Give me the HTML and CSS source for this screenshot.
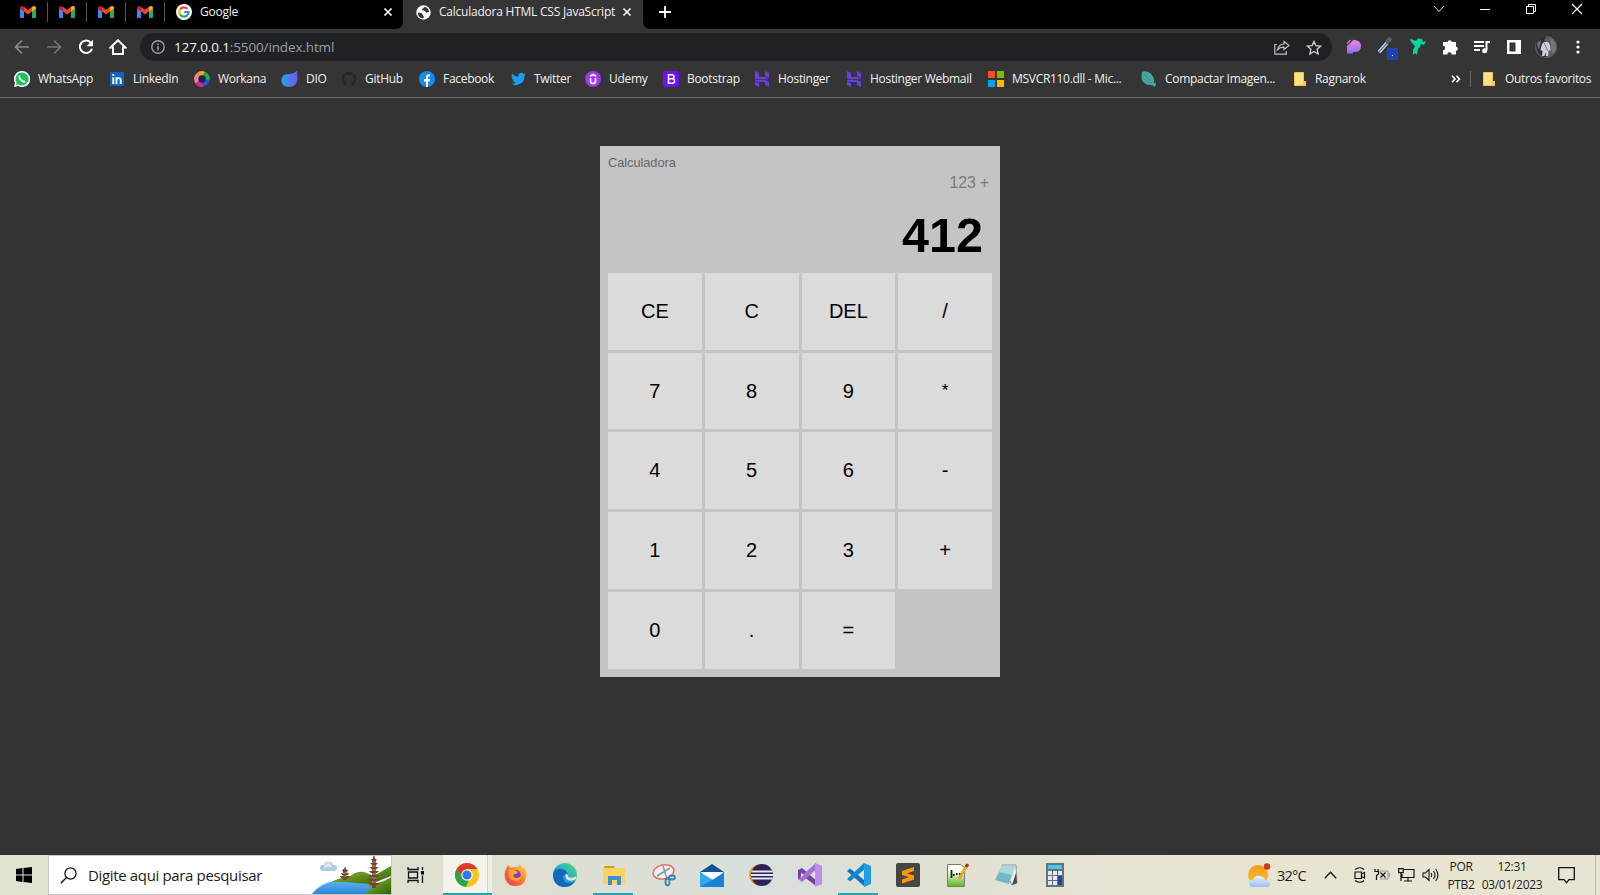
FILE: index.html
```html
<!DOCTYPE html>
<html lang="pt-BR">
<head>
<meta charset="utf-8">
<title>Calculadora HTML CSS JavaScript</title>
<link rel="stylesheet" href="styles.css">
</head>
<body>
<svg class="defs" aria-hidden="true">
  <defs>
    <linearGradient id="dioG"><stop offset="0" stop-color="#2aa0f0"/><stop offset="1" stop-color="#6a5be0"/></linearGradient>
    <linearGradient id="pG" x2="0" y2="1"><stop offset="0" stop-color="#f08ad0"/><stop offset="1" stop-color="#8d6bf5"/></linearGradient>
    <linearGradient id="ffG" x1="1" y1="0" x2="0" y2="1"><stop offset="0" stop-color="#ffe14a"/><stop offset=".5" stop-color="#ff7a2a"/><stop offset="1" stop-color="#e8305a"/></linearGradient>
    <linearGradient id="edG" x1="1" y1="0" x2="0" y2="1"><stop offset="0" stop-color="#5fd85a"/><stop offset=".45" stop-color="#25b5d0"/><stop offset="1" stop-color="#1560b5"/></linearGradient>
    <linearGradient id="sunG" x2="0" y2="1"><stop offset="0" stop-color="#f09a1c"/><stop offset="1" stop-color="#ffc233"/></linearGradient>
    <linearGradient id="cloudG" x2="0" y2="1"><stop offset="0" stop-color="#e8f1ff"/><stop offset="1" stop-color="#9dbdf0"/></linearGradient>
    <linearGradient id="lakeG" x2="0" y2="1"><stop offset="0" stop-color="#62b7f2"/><stop offset="1" stop-color="#2b86d8"/></linearGradient>
    <linearGradient id="hillG" x2="1" y2="1"><stop offset="0" stop-color="#9cc52a"/><stop offset="1" stop-color="#2e5e10"/></linearGradient>
    <linearGradient id="nppG" x2="0" y2="1"><stop offset=".3" stop-color="#fbfff2"/><stop offset="1" stop-color="#58b41c"/></linearGradient>
    <symbol id="gmail" viewBox="0 0 16 12"><path fill="#4285f4" d="M1 12h3V5L0 2v9q0 1 1 1z"/><path fill="#34a853" d="M12 12h3q1 0 1-1V2l-4 3z"/><path fill="#ea4335" d="M4 5.500V.8l4 3 4-3v4.700L8 8.500z"/><path fill="#c5221f" d="M0 2.500V2Q0 0 2 0q.8 0 2 1v4.500z"/><path fill="#fbbc04" d="M16 2.500V2q0-2-2-2-.8 0-2 1v4.500z"/></symbol>
    <symbol id="cross" viewBox="0 0 10 10"><path d="M1.500 1.500l7 7m0-7l-7 7" stroke="#fff" stroke-width="1.700" fill="none"/></symbol>
    <symbol id="hostinger" viewBox="0 0 16 16"><path fill="#673de6" d="M1 0l4 2v4h6l4 2.200H1zM11 0l4 2v5.200L11 5zM1 10l-0-1h10l4 2v5l-4-2v-3H5l-4-1zM1 10.500l4 1.500v4l-4-2z"/></symbol>
    <symbol id="folder" viewBox="0 0 14 16"><path fill="#ffe184" stroke="#f4c542" d="M1.500 1.500h9v9h2v4h-11z"/><path fill="#f6c84f" d="M10 10h3v5h-3z"/></symbol>
  </defs>
</svg>
<div class="screen">
  <header class="browser">
    <div class="tabstrip">
      <div class="tabs-left">
        <span class="pinned"><svg width="16" height="12"><use href="#gmail"/></svg></span>
        <span class="pinned"><svg width="16" height="12"><use href="#gmail"/></svg></span>
        <span class="pinned"><svg width="16" height="12"><use href="#gmail"/></svg></span>
        <span class="pinned"><svg width="16" height="12"><use href="#gmail"/></svg></span>
        <div class="tab">
          <svg width="16" height="16" viewBox="0 0 16 16"><circle cx="8" cy="8" r="8" fill="#fff"/><g fill="none" stroke-width="2.200"><path stroke="#ea4335" d="M4 5.600A4.700 4.700 0 0 1 11.500 4.800"/><path stroke="#fbbc05" d="M4 5.500a4.700 4.700 0 0 0 0 5"/><path stroke="#34a853" d="M4 10.400a4.700 4.700 0 0 0 7.200 1"/><path stroke="#4285f4" d="M11 11.600A4.700 4.700 0 0 0 12.700 8H8.200"/></g></svg>
          <span class="tab-title">Google</span>
          <svg class="tab-close" width="10" height="10"><use href="#cross"/></svg>
        </div>
      </div>
      <div class="tab active">
        <svg width="15" height="15" viewBox="0 0 16 16"><circle cx="8" cy="8" r="7.700" fill="#fff"/><path fill="#353535" d="M2 8.500c2-.5 4.500-.2 5 1.500.3 1.300 1.600 1.200 1.300 3.200l-.8 1C4 14 2 12 2 8.500zM8.500 2c-.2 1.800-2 1.200-2 2.800 0 1.300 1.400 1 2.500 1.200 1.400.3 1 2.200 2.800 2 1.200-.1 1.500-.6 2.200-.5C13.600 4 11.500 2 8.500 2z"/></svg>
        <span class="tab-title wide">Calculadora HTML CSS JavaScript</span>
        <svg class="tab-close" width="10" height="10"><use href="#cross"/></svg>
      </div>
      <div class="tabs-right">
        <svg width="12" height="12" viewBox="0 0 12 12"><path d="M6 0v12M0 6h12" stroke="#fff" stroke-width="1.800"/></svg>
        <div class="window-controls">
          <svg width="12" height="8" viewBox="0 0 12 8"><path d="M1 1l5 5.500L11 1" fill="none" stroke="#ddd"/></svg>
          <svg width="12" height="10" viewBox="0 0 12 10"><path d="M1 5.500h10" stroke="#fff"/></svg>
          <svg width="12" height="12" viewBox="0 0 12 12"><path d="M1.500 3.500h7v7h-7zM3.500 3V1.500h7v7H9" fill="none" stroke="#fff"/></svg>
          <svg width="12" height="12" viewBox="0 0 12 12"><path d="M1 1l10 10M11 1L1 11" stroke="#fff" stroke-width="1.200"/></svg>
        </div>
      </div>
    </div>

    <div class="toolbar">
      <div class="nav">
        <svg width="16" height="16" viewBox="0 0 16 16"><path d="M15 8H2M8 1.500L1.500 8 8 14.500" fill="none" stroke="#8a8a8a" stroke-width="1.700"/></svg>
        <svg width="16" height="16" viewBox="0 0 16 16"><path d="M1 8h13M8 1.500L14.500 8 8 14.500" fill="none" stroke="#757575" stroke-width="1.700"/></svg>
        <svg width="16" height="16" viewBox="0 0 16 16"><path d="M13 4A6.200 6.200 0 1 0 14 9.700" fill="none" stroke="#fff" stroke-width="2"/><path fill="#fff" d="M15 .8v6.500H8.500z"/></svg>
        <svg class="home" width="18" height="16" viewBox="0 0 18 16"><path d="M1.500 8.500L9 1.200l7.500 7.300H14V15H4V8.500z" fill="none" stroke="#fff" stroke-width="1.900"/></svg>
      </div>
      <div class="omnibox">
        <svg width="14" height="14" viewBox="0 0 14 14"><circle cx="7" cy="7" r="6.200" fill="none" stroke="#9aa0a6" stroke-width="1.400"/><path d="M7 6v4.500M7 3.400v1.500" stroke="#9aa0a6" stroke-width="1.500"/></svg>
        <span class="url"><b>127.0.0.1</b>:5500/index.html</span>
        <svg class="share" width="16" height="15" viewBox="0 0 16 15"><path d="M3 4.500H.8v9.700h11.500V11M10 1.500l5 4-5 4V7.200q-4-.2-6.500 2.600Q4.500 4.500 10 4z" fill="none" stroke="#c4c4c4" stroke-width="1.200"/></svg>
        <svg width="16" height="15" viewBox="0 0 16 16"><path d="M8 1.500l2 4.500 5 .5-3.700 3.300L12.400 15 8 12.200 3.600 15l1.100-5.200L1 6.500 6 6z" fill="none" stroke="#d0d0d0" stroke-width="1.400"/></svg>
      </div>
      <div class="extensions">
        <svg width="24" height="24" viewBox="0 0 24 24"><path fill="url(#pG)" d="M12 5q7 0 7 6.500 0 5.500-6.500 5.500h-1.500v1.500H5V12z"/><path d="M5 8.500L8.500 5M5 12l7-7" stroke="#c67dda" stroke-width="1.300"/></svg>
        <svg width="24" height="28" viewBox="0 0 24 28"><path d="M5 19l8-9" stroke="#c7d9ee" stroke-width="3.500"/><path d="M5 18.500l8-8" stroke="#5277a8" stroke-width="1.200"/><path d="M12 10l5-5" stroke="#606060" stroke-width="4"/><path fill="#1d43b5" d="M13 15h11v12H13z"/><path fill="#fff" d="M18 22h1v1h-1z"/></svg>
        <svg width="24" height="24" viewBox="0 0 24 24"><path fill="#10d39a" d="M5 4l5 2 2-2.500 4 .5 1 3 3-1-2 4-3-1-1 3-2 2-1 6-2-2-2 2v-5l2-4-3-3-2-3z"/></svg>
        <svg width="24" height="24" viewBox="0 0 24 24"><path fill="#fff" d="M5 7h4.500a2.300 2.300 0 0 1 4.500 0h4v4.500a2.300 2.300 0 0 1 0 4.500v3.500h-4.300a2.200 2.200 0 0 0-4.400 0H5v-4.300a2.200 2.200 0 0 0 0-4.400z"/></svg>
        <svg width="24" height="24" viewBox="0 0 24 24"><path d="M4 7h10M4 11h10M4 15h6" stroke="#fff" stroke-width="1.800"/><path d="M16.500 15.500V7H20" fill="none" stroke="#fff" stroke-width="2"/><circle cx="14.700" cy="15.800" r="2.500" fill="#fff"/></svg>
        <svg width="24" height="24" viewBox="0 0 24 24"><path fill="#fff" fill-rule="evenodd" d="M5 5h14v14H5zM7.500 7.500v9h6v-9z"/></svg>
        <svg width="24" height="24" viewBox="0 0 24 24"><circle cx="12" cy="12" r="11" fill="#5d5d62"/><path fill="#302f33" d="M2 7Q7 0 12 1v21Q2 22 2 7z"/><path fill="#74747a" d="M16 3q7 3 6 12l-4 4zM3 8l4-3-2 10z"/><path fill="#d0d0da" d="M8 9l2-2h4l2 3 .5 5-2 1-.5 5h-2l-.500-4-1 4H8l.5-5-2-1z"/><path d="M10 8l4 8" stroke="#707482"/><circle cx="12" cy="5" r="1.700" fill="#755e56"/></svg>
        <svg width="24" height="24" viewBox="0 0 24 24"><g fill="#fff"><circle cx="12" cy="7" r="1.600"/><circle cx="12" cy="12" r="1.600"/><circle cx="12" cy="17" r="1.600"/></g></svg>
      </div>
    </div>

    <nav class="bookmarks">
      <div class="bookmark-list">
        <a><svg width="16" height="16" viewBox="0 0 16 16"><path fill="#fff" d="M8 0a8 8 0 1 1-3.700 15L0 16l1-4A8 8 0 0 1 8 0z"/><path fill="#22c05c" d="M8 1.500a6.500 6.500 0 1 1-3.400 12l-2.700.6.700-2.500A6.500 6.500 0 0 1 8 1.500z"/><path d="M5.300 4.800q0 5 5.700 6.200" fill="none" stroke="#fff" stroke-width="1.800"/></svg>WhatsApp</a>
        <a><svg width="16" height="16" viewBox="0 0 16 16"><rect x="1" y="1" width="14" height="14" rx="1" fill="#0a66c2"/><path d="M4.300 6.300V13M4.300 3v2M7.500 13V6.300M7.500 13V9q0-1.900 2-1.900 2.200 0 2.200 2V13" fill="none" stroke="#fff" stroke-width="1.900"/></svg>LinkedIn</a>
        <a><svg width="16" height="16" viewBox="0 0 16 16"><g fill="none" stroke-width="5"><path stroke="#f6a623" d="M5 3.500A5.400 5.400 0 0 1 10 3"/><path stroke="#20ad4c" d="M10 3a5.400 5.400 0 0 1 3.200 6"/><path stroke="#2857d4" d="M13.200 9A5.400 5.400 0 0 1 9 13"/><path stroke="#d92698" d="M9 13.200a5.400 5.400 0 0 1-5.500-2"/><path stroke="#f7838a" d="M3.500 11A5.400 5.400 0 0 1 5 3.500"/></g><circle cx="8" cy="8" r="3.700" fill="#152555"/></svg>Workana</a>
        <a><svg width="17" height="16" viewBox="0 0 17 16"><path fill="url(#dioG)" d="M16 0l.5 8q-.5 7.500-8.500 8-8-.5-7.500-7T8 3q4.500 0 8-3z"/></svg>DIO</a>
        <a><svg width="16" height="16" viewBox="0 0 16 16"><path fill="#24282d" d="M8 .5a7.500 7.500 0 0 0-2.500 14.600V13c-2 .4-2.500-1-3-1.500 1.500 0 1.500 1 3 .8 0-.5.2-1 .5-1.200C2 10.500 2.500 6 4 5V2.800L6 4h4l2-1.200V5c1.500 2 1.500 5.500-2 6 .6.500.5 1 .5 4A7.500 7.500 0 0 0 8 .5z"/></svg>GitHub</a>
        <a><svg width="16" height="16" viewBox="0 0 16 16"><circle cx="8" cy="8" r="8" fill="#168cf0"/><path fill="#fff" d="M7 16v-5.500H5V8h2V6q0-3 4-2.600v2q-2-.2-2 1V8h2l-.3 2.500H9V16z"/></svg>Facebook</a>
        <a><svg width="15" height="16" viewBox="0 0 24 24"><path fill="#1d9bf0" d="M24 4.600a10 10 0 0 1-2.800.8 5 5 0 0 0 2.100-2.700 10 10 0 0 1-3.100 1.200 4.900 4.900 0 0 0-8.400 4.500A14 14 0 0 1 1.700 3.200a4.900 4.900 0 0 0 1.500 6.500A5 5 0 0 1 1 9.100a4.900 4.900 0 0 0 4 4.900 5 5 0 0 1-2.300.1 4.900 4.900 0 0 0 4.600 3.400A10 10 0 0 1 0 19.500 14 14 0 0 0 21.500 7a10 10 0 0 0 2.500-2.400z"/></svg>Twitter</a>
        <a><svg width="16" height="16" viewBox="0 0 16 16"><circle cx="8" cy="8" r="8" fill="#a435f0"/><path d="M5.500 7v3q0 2.500 2.500 2.500t2.500-2.500V7M5 5.200L8 3.400l3 1.800" fill="none" stroke="#fff" stroke-width="1.700"/></svg>Udemy</a>
        <a><svg width="16" height="16" viewBox="0 0 16 16"><rect width="16" height="16" rx="2" fill="#7012ef"/><path d="M5.500 3.700h3q2.500 0 2.500 2T8.500 7.800h-3 3.500q2.500 0 2.500 2.200T9 12.300H5.500z" fill="none" stroke="#fff" stroke-width="1.500"/></svg>Bootstrap</a>
        <a><svg width="16" height="16"><use href="#hostinger"/></svg>Hostinger</a>
        <a><svg width="16" height="16"><use href="#hostinger"/></svg>Hostinger Webmail</a>
        <a><svg width="16" height="16" viewBox="0 0 16 16"><path fill="#f25022" d="M0 0h7v7H0z"/><path fill="#7fba00" d="M9 0h7v7H9z"/><path fill="#00a4ef" d="M0 9h7v7H0z"/><path fill="#ffb900" d="M9 9h7v7H9z"/></svg>MSVCR110.dll - Mic...</a>
        <a><svg width="16" height="16" viewBox="0 0 16 16"><path fill="#43a6a0" d="M1 1q4-2 8 1 5 4 4 10l2 0q0 3-2 4-1-2-3-2-7 0-9-5-1-3 0-8z"/><path d="M3 3l8 9M2 7l6 5" stroke="#358f8b" stroke-width=".7"/></svg>Compactar Imagen...</a>
        <a><svg class="folder" width="14" height="16"><use href="#folder"/></svg>Ragnarok</a>
      </div>
      <svg class="overflow" width="10" height="8" viewBox="0 0 10 8"><path d="M1 .7L4 4 1 7.300M5.500.7L8.500 4l-3 3.300" fill="none" stroke="#fff" stroke-width="1.600"/></svg>
      <a class="other"><svg class="folder" width="14" height="16"><use href="#folder"/></svg>Outros favoritos</a>
    </nav>
  </header>

  <main class="page">
    <section class="calc">
      <h4 class="calc-title">Calculadora</h4>
      <div class="operation">123 +</div>
      <div class="current">412</div>
      <div class="keys">
        <button>CE</button><button>C</button><button>DEL</button><button>/</button>
        <button>7</button><button>8</button><button>9</button><button class="times">*</button>
        <button>4</button><button>5</button><button>6</button><button>-</button>
        <button>1</button><button>2</button><button>3</button><button>+</button>
        <button>0</button><button>.</button><button>=</button>
      </div>
    </section>
  </main>

  <footer class="taskbar">
    <div class="start"><svg width="16" height="16" viewBox="0 0 16 16"><path d="M0 2l6.500-1v6.500H0zM7.500.9L16 0v7.500H7.500zM0 8.500h6.500V15L0 14zM7.500 8.500H16V16l-8.500-1z"/></svg></div>
    <div class="search">
      <svg class="lens" width="17" height="17" viewBox="0 0 17 17"><circle cx="10.500" cy="6.500" r="5.600" fill="none" stroke="#111" stroke-width="1.300"/><path d="M6.500 10.500L.8 16.200" stroke="#111" stroke-width="1.400"/></svg>
      <span>Digite aqui para pesquisar</span>
      <svg class="scene" width="79" height="38" viewBox="0 0 79 38">
        <path fill="#a9cbe0" d="M11 15q-4-1-3-4 1-3 4-2 1-4 5-3 4 0 4 3 4 0 4 3t-3 3z"/><path fill="#d6e8f2" d="M12 12q0-5 4-5t4 4z"/>
        <path fill="url(#lakeG)" d="M0 38q8-11 23-13l34-1 5 14z"/>
        <path fill="url(#hillG)" d="M20 26q5-4 17-5 7-6 15-5l7 3 6-1 14-8v10l-20 8-15-1-10-1z"/>
        <path fill="url(#hillG)" d="M53 38q3-4 7-4-3-5-8-6l12-1q8-1 15-6v17z"/>
        <g fill="#6d4630"><path d="M32.500 11h1l.500 2h-1.500zM30 14h6l-1 2h-4zM29 17h8l-1 2h-6zM28 20h10l-1 2h-8zM31 13h3.500v11H31zM61.500 0h1l1 4h-3zM59 3h6l-1.500 2h-3zM58 7h8l-2 2h-4zM57.500 11h9l-2 2h-5zM57 15h10l-2 2h-6zM56.500 19h11l-2 2h-7zM56 23h12l-2 2h-8zM56 27h12l-2 2h-8zM60 4h4v28h-4z"/></g>
        <path d="M60 6h4M60 10h4M60 14h4M60 18h4M60 22h4M60 26h4M31 17h3.500M31 20h3.500" stroke="#c8906a"/>
      </svg>
    </div>
    <div class="apps">
      <span class="task-view"><svg width="17" height="16" viewBox="0 0 17 16"><path d="M1 0v2.500h10V0M1 16v-2.500h10V16M1.500 5h9v6h-9zM15.500 0v3M15.500 8.500V16" fill="none" stroke="#111" stroke-width="1.300"/><path d="M14 4h3v3.500h-3z"/></svg></span>
      <span class="app current-app"><svg width="24" height="24" viewBox="0 0 24 24"><circle cx="12" cy="12" r="12" fill="#fbc31b"/><path fill="#de3b2e" d="M1.600 6A12 12 0 0 1 22.400 6H12L7 15z"/><path fill="#2ba24c" d="M1.600 6l5.600 9 6.800 2-3 7A12 12 0 0 1 1.600 6z"/><circle cx="12" cy="12" r="5.700" fill="#fff"/><circle cx="12" cy="12" r="4.600" fill="#2f78e8"/></svg></span>
      <span class="app"><svg width="24" height="24" viewBox="0 0 24 24"><path fill="url(#ffG)" d="M2 6l2-4 3 3q4-2 7-1l1-3q3 2 4 5l1-2q4 5 2 11-2 8-10 8-9 0-11-8-1-5 1-9z"/><circle cx="12" cy="12" r="4.800" fill="#7a3fd0"/><path fill="#ffa52b" d="M5 7h5l4 2q-2 3-4 2-2 3 2 4 3 0 5-2 0 5-5 5-7-1-7-7z"/></svg></span>
      <span class="app"><svg width="24" height="24" viewBox="0 0 24 24"><circle cx="12" cy="12" r="12" fill="url(#edG)"/><path fill="#1167bb" d="M.3 10Q3 5 9 6q5 1 6 6-4-2-5 2 0 6 6 6 3 0 6-2-5 7-12 6Q-1 22 .3 10z"/><path fill="#e2e2d7" d="M13 11q3 0 2 3 5 2 8.500-1 0 3-2 4-5 2-8-1-2-3-.5-5z"/></svg></span>
      <span class="app running"><svg width="24" height="20" viewBox="0 0 24 20"><path fill="#d5a014" d="M2 1h10l1 3H2z"/><path fill="#fbd364" d="M1 3h22v16H1z"/><path fill="#3c8fd2" d="M6 11h13v9h-4v-5h-5v5H6z"/></svg></span>
      <span class="app snip"><svg width="24" height="24" viewBox="0 0 24 24"><ellipse cx="11.500" cy="9" rx="10.500" ry="7" fill="#f6efed" stroke="#dd7169" stroke-width="1.500" transform="rotate(-12 11 9)"/><path d="M11 3l4 13M5 13l13-8" stroke="#7d9baa" stroke-width="1.500"/><g fill="none" stroke="#397fb5" stroke-width="1.800"><ellipse cx="15.500" cy="19" rx="2" ry="3.500"/><ellipse cx="20" cy="14.500" rx="3" ry="2"/></g></svg></span>
      <span class="app"><svg width="24" height="23" viewBox="0 0 24 23"><path fill="#0f5295" d="M0 8l12-8 12 8v4H0z"/><path fill="#fff" d="M1 8h22v8H1z"/><path fill="#31a9ed" d="M0 8l13 8L24 8v15H0z"/><path fill="#1584d4" d="M0 23l24-14v14z"/></svg></span>
      <span class="app"><svg width="24" height="24" viewBox="0 0 24 24"><circle cx="10.500" cy="12" r="10.500" fill="#f7941e"/><circle cx="13" cy="12" r="11" fill="#2c2255"/><path d="M2.500 8.500h21M2 12h22M2.500 15.500h21" stroke="#e7e4f4" stroke-width="1.800"/></svg></span>
      <span class="app"><svg width="24" height="24" viewBox="0 0 24 24"><path fill="#74449c" d="M0 7l4-2 14 12v6L5 13l-2 4-3-1z"/><path fill="#a170d6" d="M0 16L18 0v7L4 19z"/><path fill="#bd8df0" d="M17 0l7 3v18l-7 3z"/><path fill="#dfe0d7" d="M3 9.500v5L6 12zM17 8v8l-5-4z"/></svg></span>
      <span class="app running"><svg width="24" height="24" viewBox="0 0 24 24"><path fill="#1173b7" d="M0 8l3-2.500L18 17v7z"/><path fill="#168acc" d="M0 16L17 0v7L3 18.500z"/><path fill="#249de2" d="M17 0l7 3v18l-7 3z"/><path fill="#d9dfda" d="M17 7v10l-6-5z"/></svg></span>
      <span class="app"><svg width="24" height="24" viewBox="0 0 24 24"><rect width="24" height="24" rx="2" fill="#464646"/><path fill="#ff9800" d="M6 8l12-4v4l-7 2.500 7 2v4L6 20.500v-4l7-2.500-7-2z"/></svg></span>
      <span class="app"><svg width="24" height="24" viewBox="0 0 24 24"><path fill="url(#nppG)" stroke="#777" d="M2.500 1.500h13l4 3v19h-17z"/><path d="M6.500 7v8M8 12h1.500M11 11h1.500M14 11h2" stroke="#222" stroke-width="1.800"/><path d="M14 16l8-14" stroke="#e5a72a" stroke-width="3"/><path d="M21 4l2-3" stroke="#9f302c" stroke-width="3"/></svg></span>
      <span class="app"><svg width="24" height="24" viewBox="0 0 24 24"><path fill="#ececec" stroke="#777" stroke-width=".7" d="M8 2h14l1 18-5 2z"/><path fill="#72b8c9" d="M8 3h13l-6 18-14-4z"/><path fill="#a6dae2" d="M8 3h13l-3 9-13-3z"/><path fill="#484848" d="M18 22l4-12 1 10z"/></svg></span>
      <span class="app"><svg width="18" height="24" viewBox="0 0 18 24"><path fill="#65717d" d="M0 0h18v24H0z"/><path fill="#42c8ee" d="M2 2h14v4H2z"/><path fill="#e6e9eb" d="M2 8h4v4H2zM7 8h4v4H7zM12 8h4v4h-4zM2 13h4v4H2zM7 13h4v4H7zM2 18h4v4H2zM7 18h4v4H7z"/><path fill="#174d8c" d="M12 13h4v9h-4z"/></svg></span>
    </div>
    <div class="tray">
      <svg width="24" height="24" viewBox="0 0 24 24"><circle cx="11" cy="12" r="10" fill="url(#sunG)"/><path fill="url(#cloudG)" d="M5 24q-4-1-3-5 1-3 4-2 2-5 7-4 4 0 5 4 5 0 5 4 0 3-3 3z"/><circle cx="20" cy="3.500" r="3.200" fill="#d13420"/></svg>
      <span class="temp">32°C</span>
      <svg class="up" width="13" height="8" viewBox="0 0 13 8"><path d="M.8 7.200L6.500 1.200l5.700 6" fill="none" stroke="#111" stroke-width="1.300"/></svg>
      <svg class="cam" width="12" height="16" viewBox="0 0 12 16"><path d="M1 2.500q5-3.500 9 0M1 13.500q5 3.500 9 0M1 5h6.500v6.500H1zM7.500 7l3-1.500V11l-3-1.500z" fill="none" stroke="#111" stroke-width="1.200"/></svg>
      <svg class="bat" width="16" height="12" viewBox="0 0 16 12"><path d="M5 2h9v8H6M14.500 4.500h1v3h-1" fill="none" stroke="#999"/><path d="M1 0v2.500M4 0v2.500M.5 2.500h4v2.500l-2 1.500V11M6.500 3.500l5 5M11.500 3.500l-5 5" fill="none" stroke="#111" stroke-width="1.200"/></svg>
      <svg class="mon" width="17" height="14" viewBox="0 0 17 14"><path d="M6 1.500h10v8H4V6M10 9.500V13M6 13h8M.7.7h4.500v4H.7zM3 5v8" fill="none" stroke="#111" stroke-width="1.200"/></svg>
      <svg class="snd" width="17" height="14" viewBox="0 0 17 14"><path d="M1 5h2.500L7 1.500v11L3.500 9H1zM9 5q1.500 2 0 4M11.500 3q3 4 0 8M13.700 1q4.500 6 0 12" fill="none" stroke="#111" stroke-width="1.100"/></svg>
      <div class="stack lang"><span>POR</span><span>PTB2</span></div>
      <div class="stack clock"><span>12:31</span><span>03/01/2023</span></div>
      <svg class="notif" width="17" height="17" viewBox="0 0 17 17"><path d="M.7.700h15.600v12H11l-2.500 3-2.500-3H.7z" fill="none" stroke="#111" stroke-width="1.300"/></svg>
    </div>
  </footer>
</div>
</body>
</html>
```
FILE: styles.css
```css
* { box-sizing: border-box; }
body { margin: 0; background: #333; font-family: "Open Sans", "Noto Sans", sans-serif; }
.defs { position: absolute; width: 0; height: 0; }
svg { flex: none; display: block; }
.screen { width: 1600px; height: 895px; display: flex; flex-direction: column; overflow: hidden; }

/* Browser frame */
.browser { flex: none; height: 98px; background: #353535; border-bottom: 1px solid #6a6a6a; color: #f1f1f1; }
.tabstrip { height: 29px; display: flex; font-size: 12px; line-height: 16px; }
.tabs-left { width: 403px; background: #000; border-bottom-right-radius: 7px; display: flex; padding: 0 10px 5px 9px; align-items: center; }
.pinned { width: 39px; height: 20px; border-right: 1px solid #555; display: flex; align-items: center; padding-left: 11px; }
.tab { display: flex; align-items: center; flex: 1; padding-left: 11px; }
.tab-title { margin-left: 8px; letter-spacing: -.25px; white-space: nowrap; }
.tab-close { margin-left: auto; }
.tab.active { flex: none; width: 240px; padding: 0 11px 5px 13px; }
.tab-title.wide { letter-spacing: -.23px; }
.tabs-right { flex: 1; background: #000; border-bottom-left-radius: 7px; display: flex; justify-content: space-between; padding: 0 17px 5px 16px; align-items: center; }
.window-controls { display: flex; gap: 34px; align-items: center; padding-bottom: 6px; }

.toolbar { height: 34px; display: flex; align-items: center; padding: 4px 10px 2px 14px; }
.nav { display: flex; align-items: center; gap: 16px; width: 126px; }
.home { margin-left: -1px; }
.omnibox { width: 1192px; height: 28px; border-radius: 14px; background: #202124; display: flex; align-items: center; padding: 0 10px 0 11px; }
.url { margin-left: 9px; font-size: 13.500px; color: #9aa0a6; letter-spacing: -.13px; white-space: nowrap; }
.url b { color: #f5f5f5; font-weight: 400; }
.share { margin-left: auto; margin-right: 16px; }
.extensions { display: flex; align-items: center; gap: 8px; margin-left: 10px; }

.bookmarks { height: 34px; display: flex; align-items: center; padding: 0 0 2px 14px; font-size: 12px; letter-spacing: -.3px; white-space: nowrap; }
.bookmark-list { width: 1437px; display: grid; grid-template-columns: 95px 85px 87px 60px 78px 92px 74px 78px 91px 92px 142px 153px 152px 1fr; }
.bookmarks a { display: flex; align-items: center; gap: 8px; line-height: 16px; }
.overflow { margin-right: 9px; }
.bookmarks .other { border-left: 1px solid #666; padding-left: 11px; gap: 9px; }

/* Calculator */
.page { flex: 1; background: #333; display: flex; justify-content: center; align-items: flex-start; padding-top: 48px; }
.calc { width: 400px; height: 531px; background: #c4c4c4; padding: 8px; font-family: "Liberation Sans", Arial, sans-serif; display: flex; flex-direction: column; }
.calc-title { margin: 0; font-size: 12.800px; line-height: 17px; font-weight: 400; color: #666; letter-spacing: -.05px; }
.operation { text-align: right; font-size: 16px; line-height: 20px; padding: 2px 3px 0 0; color: #7a7a7a; letter-spacing: -.2px; }
.current { flex: 1; text-align: right; font-size: 48.500px; line-height: 54px; font-weight: 700; padding: 15px 9px 0 0; color: #000; }
.keys { height: 396px; display: grid; grid-template-columns: repeat(4, 1fr); grid-template-rows: 77px 76px 77px 77px 77px; gap: 3px; }
.keys button { border: 0; padding: 0; background: #dbdbdb; color: #000; font: 20px "Liberation Sans", Arial, sans-serif; }
.keys .times { font-size: 17px; }

/* Taskbar */
.taskbar { flex: none; height: 40px; display: flex; color: #1b1b1b; background: linear-gradient(90deg, #e2e2d0, #dedfd2 35%, #d9dfdb 47%, #e1e0d2 60%, #e8e4d2 75%, #e7e4d3); }
.start { width: 48px; display: flex; align-items: center; justify-content: center; }
.search { width: 344px; background: #fff; border: 1px solid #c6c6c6; display: flex; align-items: center; font-size: 15px; letter-spacing: -.35px; padding-left: 11px; white-space: nowrap; }
.search span { margin-left: 11px; }
.scene { margin-left: auto; }
.apps { display: flex; margin-left: -1px; }
.task-view { width: 52px; display: flex; align-items: center; padding-left: 16px; }
.app { width: 49px; display: flex; align-items: center; justify-content: center; padding-right: 2px; }
.running { background: linear-gradient(#22a6ad, #22a6ad) 3px 100% / 40px 2px no-repeat; }
.current-app { background: linear-gradient(#22a6ad, #22a6ad) 0 100% / 100% 2px no-repeat, linear-gradient(90deg, #f3f3ec 44px, #d1d1c7 44px 45px, #eeeee5 45px); }
.snip { padding-left: 2px; }
.tray { flex: 1; display: flex; align-items: center; justify-content: flex-end; border-right: 1px solid #b8b8aa; margin-right: 4px; padding-right: 20px; }
.temp { font-size: 14.500px; width: 31px; margin: 0 16px 0 6px; letter-spacing: -.8px; white-space: nowrap; }
.up { margin-right: 17px; }
.cam { margin-right: 8px; }
.bat { margin-right: 8px; }
.mon { margin-right: 7px; }
.snd { margin-right: 4px; }
.stack { display: flex; flex-direction: column; align-items: center; font-size: 12px; line-height: 18px; letter-spacing: -.3px; padding-top: 1px; }
.lang { width: 34px; margin-left: 1px; }
.clock { width: 72px; margin-right: 1px; margin-left: -2px; }
.notif { margin-left: 9px; }
```
